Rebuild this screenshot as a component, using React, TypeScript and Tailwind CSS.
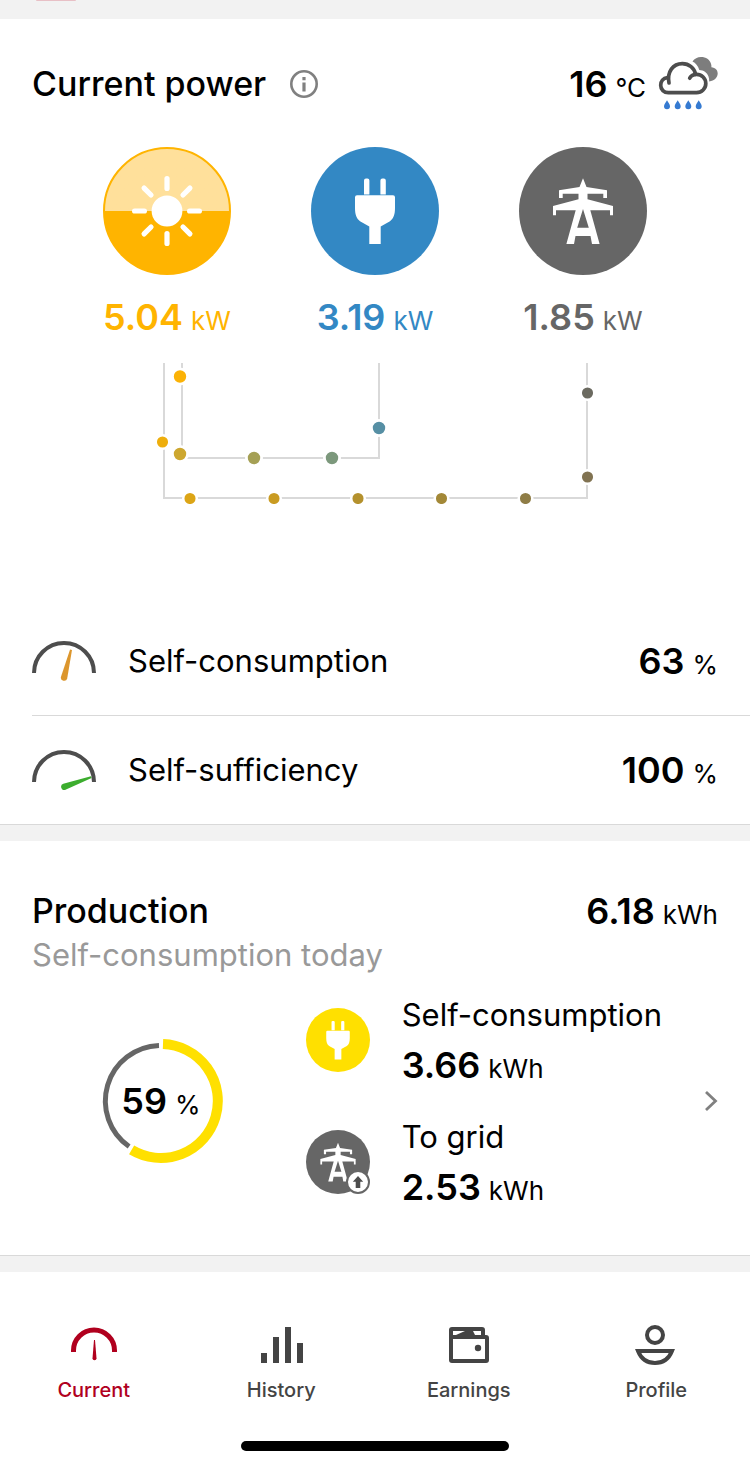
import { useState } from "react";
import type { ReactNode } from "react";

const SunGlyph = () => (
  <svg viewBox="28 28 72 72" className="size-[72px]" aria-hidden="true">
    <circle cx="64" cy="64" r="15.4" fill="#fff" />
    {[0, 45, 90, 135, 180, 225, 270, 315].map((angle) => (
      <path
        key={angle}
        d="M64 31.6V41.4"
        stroke="#fff"
        strokeWidth="5.2"
        strokeLinecap="round"
        transform={`rotate(${angle} 64 64)`}
      />
    ))}
  </svg>
);

const PlugGlyph = ({ className }: { className: string }) => (
  <svg viewBox="30 30 68 68" className={className} fill="#fff" aria-hidden="true">
    <path d="M53 47.500V33.600q0-2 2-2h1.400q2 0 2 2V47.500zM69.400 47.500V33.600q0-2 2-2h1.400q2 0 2 2V47.500z" />
    <path d="M46 48.300H82q2 0 2 2V61c0 6.500-1.500 10.500-5 13.200L69.700 79.500V97H58.300V79.500L49 74.200C45.500 71.500 44 67.500 44 61V50.300q0-2 2-2z" />
  </svg>
);

const PylonGlyph = ({ className }: { className: string }) => (
  <svg viewBox="30 30 68 68" className={className} fill="#fff" aria-hidden="true">
    <path
      fillRule="evenodd"
      d="M64 31.300 67.500 40 88 43.200V51H84.300V46.700H68.500V52.300L94 59V68.300H91V63.300H71.300L80.600 97H73L71.500 89H56.500L55 97H47.400L56.700 63.300H37V68.300H34V59L59.500 52.300V46.700H43.700V51H40V43.200L60.500 40zM64 62 58.200 80.700H69.800z"
    />
  </svg>
);

const WeatherIcon = () => (
  <svg viewBox="0 0 60 56" className="h-14 w-[60px]" fill="none" role="img" aria-label="Rain">
    <path
      d="M34.500 5.600C36.500 2.500 39.500 1 43 1c5 0 8.800 2.700 10 6.800 .4 1.300.5 2.300.4 3.400 3.900.4 6.300 2.700 6.300 6.100 0 4.100-3.300 7.500-8.500 8.200.2-4.500-1.200-7.500-4-9.600-1.800-1.400-3.600-1.900-5.900-2C40 9.800 37.600 7 34.500 5.600z"
      fill="#7d7d7d"
    />
    <g stroke="#4d4d4d" strokeWidth="3.700" strokeLinecap="round">
      <path d="M11 27C8.800 16 15 7.600 24.300 7.600c6.800 0 12 4.400 13.400 10.700" />
      <path d="M9.500 21.600C5 22.200 2.700 25.500 2.700 29.200c0 4.300 3.300 7.500 7.600 7.500H38.600a9.200 9.200 0 0 0 0-18.400c-3.200 0-5.700 1.500-6.900 3.900" />
    </g>
    {[9, 19.7, 30.3, 40.7].map((x) => (
      <path
        key={x}
        d={`M${x} 44.300c1 2 3 3.800 3 6a3 3 0 0 1-6 0c0-2.200 2-4 3-6z`}
        fill="#357ad1"
      />
    ))}
  </svg>
);

const Gauge = ({ angle, color }: { angle: number; color: string }) => (
  <svg viewBox="0 0 64 40" className="h-10 w-16 shrink-0" aria-hidden="true">
    <path d="M2 32a30 30 0 0 1 60 0" fill="none" stroke="#4d4d4d" strokeWidth="4" />
    <path
      d="M31 8 28.800 36.600a3.200 3.200 0 0 0 6.400 0L33 8z"
      fill={color}
      transform={`rotate(${angle} 32 37)`}
    />
  </svg>
);

const outerDots = [
  { x: 11.5, y: 82, color: "#eeae0c" },
  { x: 39, y: 138.5, color: "#dca516" },
  { x: 123, y: 138.5, color: "#c99b22" },
  { x: 207, y: 138.5, color: "#b4912d" },
  { x: 290.5, y: 138.5, color: "#a38837" },
  { x: 374.5, y: 138.5, color: "#8f7d46" },
  { x: 436.5, y: 117, color: "#817352" },
  { x: 436.5, y: 33, color: "#6b6a60" },
];

const innerDots = [
  { x: 29, y: 16.5, color: "#fbb206" },
  { x: 29, y: 94, color: "#cda72f" },
  { x: 103, y: 98, color: "#a5a055" },
  { x: 181, y: 98, color: "#7c987c" },
  { x: 228, y: 68, color: "#568fa4" },
];

const PowerFlow = () => (
  <svg viewBox="0 0 448 144" className="h-36 w-[448px]" aria-hidden="true">
    <g fill="none" stroke="#d9d9d9" strokeWidth="2">
      <path d="M13 3V138H436V3" />
      <path d="M31 3V90M36 98H228V3" />
    </g>
    {outerDots.map((d) => (
      <circle key={`${d.x}-${d.y}`} cx={d.x} cy={d.y} r="6.800" fill={d.color} stroke="#fff" strokeWidth="2.500" />
    ))}
    {innerDots.map((d) => (
      <circle key={`${d.x}-${d.y}`} cx={d.x} cy={d.y} r="7.600" fill={d.color} stroke="#fff" strokeWidth="2.800" />
    ))}
  </svg>
);

const Value = ({ value, unit }: { value: string; unit: string }) => (
  <div className="flex items-baseline gap-2 whitespace-nowrap">
    <span className="text-4xl font-semibold leading-10">{value}</span>
    <span className="text-[26px] leading-7">{unit}</span>
  </div>
);

const PowerSource = ({ circle, text, value, children }: { circle: string; text: string; value: string; children: ReactNode }) => (
  <div className={`flex w-32 flex-col items-center gap-[22px] ${text}`}>
    <div className={`flex size-32 items-center justify-center rounded-full ${circle}`}>{children}</div>
    <Value value={value} unit="kW" />
  </div>
);

const GaugeRow = ({ label, value, angle, color }: { label: string; value: string; angle: number; color: string }) => (
  <div className="box-content flex h-[108px] items-center gap-8 pr-8">
    <Gauge angle={angle} color={color} />
    <span className="flex-1 text-[31px] leading-10">{label}</span>
    <Value value={value} unit="%" />
  </div>
);

const tabs = [
  {
    name: "Current",
    icon: (
      <>
        <path d="M3.500 32v-1.500a20.500 20.500 0 0 1 41 0V32" fill="none" stroke="currentColor" strokeWidth="5" />
        <path d="M24 20h1l1.500 18.300a2 2 0 0 1-4 0z" fill="currentColor" />
      </>
    ),
  },
  {
    name: "History",
    icon: <path d="M4 33h6v10H4zM16 17h6v26h-6zM28 7h6v36h-6zM40 23h6v20h-6z" fill="currentColor" />,
  },
  {
    name: "Earnings",
    icon: (
      <>
        <path
          fillRule="evenodd"
          d="M7 7H37q3 0 3 3V15h1q3 0 3 3V40q0 3-3 3H7q-3 0-3-3V10q0-3 3-3zM8 11V15H11L20 11zM28 11 30 15H36V11zM8 19V39H40V19z"
          fill="currentColor"
        />
        <circle cx="33" cy="28" r="3.200" fill="currentColor" />
      </>
    ),
  },
  {
    name: "Profile",
    icon: (
      <g fill="none" stroke="currentColor" strokeWidth="4">
        <circle cx="23" cy="15" r="8" />
        <path d="M6 31H40C37 38.500 31 43 23 43S9 38.500 6 31z" />
      </g>
    ),
  },
];

const App = () => {
  const [activeTab, setActiveTab] = useState("Current");

  return (
    <div className="bg-[#f2f2f2] font-['Inter',sans-serif] text-black">
      <div className="h-[19px] px-9">
        <div className="h-px w-10 rounded-b-full bg-[#e8c0c6]" />
      </div>

      <section className="border-b border-[#d9d9d9] bg-white pt-[33px]">
        <header className="flex h-16 items-center justify-between px-8">
          <div className="flex items-center gap-6">
            <h2 className="text-[34px] font-medium leading-10">Current power</h2>
            <button type="button" aria-label="About current power">
              <svg viewBox="0 0 28 28" className="size-7" fill="none">
                <circle cx="14" cy="14" r="12.700" stroke="#808080" strokeWidth="2.600" />
                <path d="M14 12.500V21.500M14 7V10.200" stroke="#808080" strokeWidth="3.200" />
              </svg>
            </button>
          </div>
          <div className="flex items-center gap-3">
            <Value value="16" unit="°C" />
            <WeatherIcon />
          </div>
        </header>

        <div className="mt-[31px] flex justify-center gap-20">
          <PowerSource
            circle="border-2 border-[#ffb400] bg-linear-to-b from-[#ffe09b] from-50% to-[#ffb400] to-50%"
            text="text-[#ffb400]"
            value="5.04"
          >
            <SunGlyph />
          </PowerSource>
          <PowerSource circle="bg-[#3388c4]" text="text-[#3388c4]" value="3.19">
            <PlugGlyph className="size-[68px]" />
          </PowerSource>
          <PowerSource circle="bg-[#666666]" text="text-[#666666]" value="1.85">
            <PylonGlyph className="size-[68px]" />
          </PowerSource>
        </div>

        <div className="mt-[23px] flex justify-center">
          <PowerFlow />
        </div>

        <div className="ml-8 mt-[103px] divide-y divide-[#d9d9d9]">
          <GaugeRow label="Self-consumption" value="63" angle={14} color="#dc962d" />
          <GaugeRow label="Self-sufficiency" value="100" angle={70} color="#3cad2e" />
        </div>
      </section>

      <section className="mt-4 border-b border-[#d9d9d9] bg-white px-8 pb-12 pt-[50px]">
        <header className="flex items-center justify-between">
          <h2 className="text-[34px] font-medium leading-10">Production</h2>
          <Value value="6.18" unit="kWh" />
        </header>
        <p className="mt-1 text-[31px] leading-10 text-[#999999]">Self-consumption today</p>

        <div className="mt-5 flex items-center">
          <div className="mr-4 grid flex-1 place-items-center">
            <svg viewBox="0 0 124 124" className="col-start-1 row-start-1 size-[124px]" fill="none" aria-hidden="true">
              <path d="M64 5A57 57 0 1 1 32.600 110.900" stroke="#ffe000" strokeWidth="10" />
              <path d="M30.100 107.500A55.500 55.500 0 0 1 60 6.500" stroke="#666" strokeWidth="5" />
            </svg>
            <div className="col-start-1 row-start-1">
              <Value value="59" unit="%" />
            </div>
          </div>

          <div className="flex flex-col gap-8">
            <div className="flex items-center gap-8">
              <div className="flex size-16 items-center justify-center rounded-full bg-[#ffe000]">
                <PlugGlyph className="size-10" />
              </div>
              <div className="flex flex-col gap-2.5">
                <span className="text-[31px] leading-10">Self-consumption</span>
                <Value value="3.66" unit="kWh" />
              </div>
            </div>
            <div className="flex items-center gap-8">
              <div className="relative flex size-16 items-center justify-center rounded-full bg-[#666666]">
                <PylonGlyph className="size-10" />
                <svg viewBox="0 0 24 24" className="absolute bottom-0 right-0 size-6" aria-hidden="true">
                  <circle cx="12" cy="12" r="11" fill="#fff" stroke="#666" strokeWidth="2" />
                  <path d="M12 6 17.200 11.800H14.300V18H9.700V11.800H6.800z" fill="#4d4d4d" />
                </svg>
              </div>
              <div className="flex flex-col gap-2.5">
                <span className="text-[31px] leading-10">To grid</span>
                <Value value="2.53" unit="kWh" />
              </div>
            </div>
          </div>

          <button type="button" aria-label="Production details" className="ml-[42px]">
            <svg viewBox="0 0 14 22" className="h-[22px] w-3.5" fill="none" stroke="#808080" strokeWidth="2.800">
              <path d="M2 2 11.500 11 2 20" />
            </svg>
          </button>
        </div>
      </section>

      <nav className="mt-4 bg-white pb-4 pt-12">
        <div className="grid grid-cols-4">
          {tabs.map((tab) => (
            <button
              key={tab.name}
              type="button"
              onClick={() => setActiveTab(tab.name)}
              className={`flex flex-col items-center gap-2 text-xl font-medium leading-7 ${
                activeTab === tab.name ? "text-[#b0001e]" : "text-[#444444]"
              }`}
            >
              <svg viewBox="0 0 48 48" className="size-12" aria-hidden="true">
                {tab.icon}
              </svg>
              {tab.name}
            </button>
          ))}
        </div>
        <div className="mx-auto mt-[37px] h-2.5 w-[268px] rounded-full bg-black" />
      </nav>
    </div>
  );
};

export default App;
